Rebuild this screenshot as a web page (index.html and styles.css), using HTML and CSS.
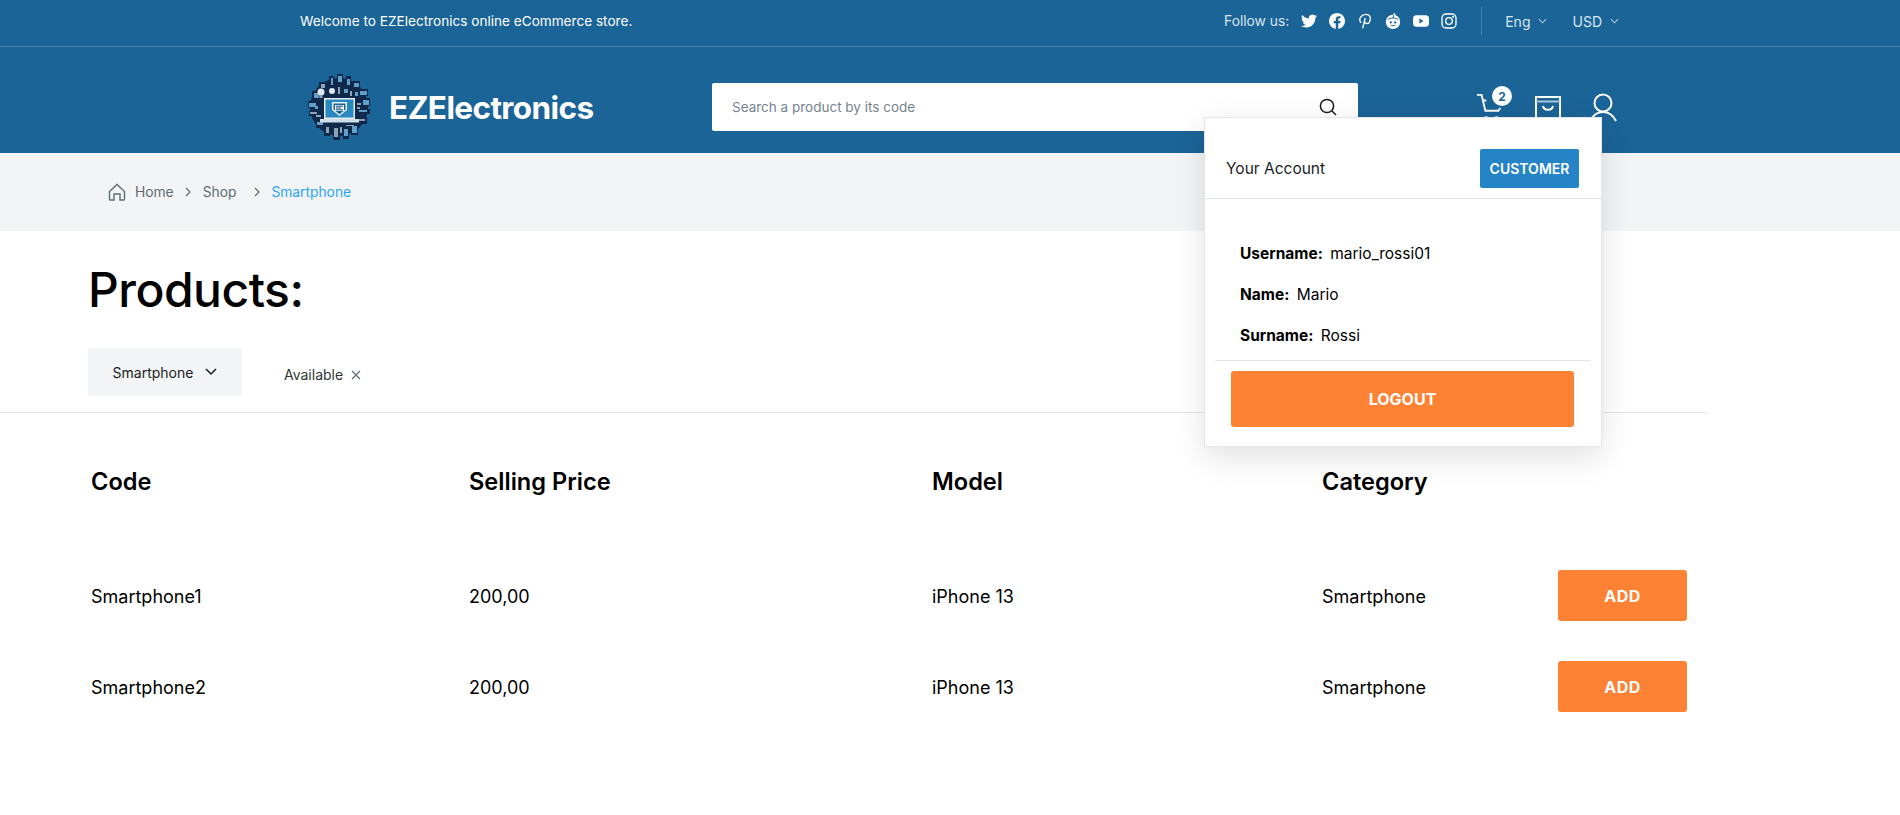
FILE: index.html
```html
<!DOCTYPE html>
<html lang="en">
<head>
    <meta charset="UTF-8">
    <meta name="viewport" content="width=device-width, initial-scale=1.0">
    <title>EZElectronics - Products</title>
    <link rel="stylesheet" href="styles.css">
</head>
<body>
    <header class="site-header">
        <div class="top-bar">
            <p class="welcome">Welcome to EZElectronics online eCommerce store.</p>
            <div class="top-right">
                <span class="follow">Follow us:</span>
                <div class="socials">
                    <svg class="social" viewBox="0 0 24 24"><path d="M23.953 4.57a10 10 0 01-2.825.775 4.958 4.958 0 002.163-2.723c-.951.555-2.005.959-3.127 1.184a4.92 4.92 0 00-8.384 4.482C7.69 8.095 4.067 6.13 1.64 3.162a4.822 4.822 0 00-.666 2.475c0 1.71.87 3.213 2.188 4.096a4.904 4.904 0 01-2.228-.616v.06a4.923 4.923 0 003.946 4.827 4.996 4.996 0 01-2.212.085 4.936 4.936 0 004.604 3.417 9.867 9.867 0 01-6.102 2.105c-.39 0-.779-.023-1.17-.067a13.995 13.995 0 007.557 2.209c9.053 0 13.998-7.496 13.998-13.985 0-.21 0-.42-.015-.63A9.935 9.935 0 0024 4.59z"/></svg>
                    <svg class="social" viewBox="0 0 24 24"><path d="M24 12.073c0-6.627-5.373-12-12-12s-12 5.373-12 12c0 5.99 4.388 10.954 10.125 11.854v-8.385H7.078v-3.47h3.047V9.43c0-3.007 1.792-4.669 4.533-4.669 1.312 0 2.686.235 2.686.235v2.953H15.83c-1.491 0-1.956.925-1.956 1.874v2.25h3.328l-.532 3.47h-2.796v8.385C19.612 23.027 24 18.062 24 12.073z"/></svg>
                    <svg class="social" viewBox="0 0 24 24"><path class="line" d="M6 14.500C4 12.500 3.800 9 5.500 6.300 7.500 3 12 1.500 15.500 2.600c3.500 1.100 5 4.200 4.300 7.600-.7 3.500-3 5.900-5.800 5.500-1.800-.3-2.700-1.600-2.600-3M12.300 7.500 8.500 23"/></svg>
                    <svg class="social" viewBox="0 0 24 24">
                        <path fill-rule="evenodd" d="M12 2.500a10.750 10.750 0 100 21.500 10.750 10.750 0 000-21.500zM8.700 12.500a1.700 1.700 0 110 3.400 1.700 1.700 0 010-3.400zm6.600 0a1.700 1.700 0 110 3.400 1.700 1.700 0 010-3.400z"/>
                        <path class="cut" d="M4 10.500C7 6.500 17 6.500 20 10.500M8.200 18c2.200 1.500 5.400 1.500 7.600 0M12 7.500l1-4.500"/>
                        <circle cx="14" cy="2" r="1.700"/>
                    </svg>
                    <svg class="social" viewBox="0 0 24 24"><path fill-rule="evenodd" d="M5 3.500h14a5 5 0 015 4.500v8a5 5 0 01-5 4.500H5a5 5 0 01-5-4.500V8a5 5 0 015-4.500zM9.600 8.400v7.200l6.200-3.600z"/></svg>
                    <svg class="social" viewBox="0 0 24 24"><rect class="line" x="1.500" y="1.500" width="21" height="21" rx="6"/><circle class="line" cx="12" cy="12" r="5"/><circle cx="18.200" cy="5.800" r="1.500"/></svg>
                </div>
                <span class="top-divider"></span>
                <span class="picker">Eng <svg class="picker-arrow" viewBox="0 0 10 6"><path d="M1 1l4 4 4-4"/></svg></span>
                <span class="picker">USD <svg class="picker-arrow" viewBox="0 0 10 6"><path d="M1 1l4 4 4-4"/></svg></span>
            </div>
        </div>

        <div class="main-bar">
            <a class="brand" href="#">
                <svg class="brand-logo" viewBox="0 0 66 68">
                    <circle cx="32" cy="34" r="29" fill="#10294a"/>
                    <g fill="#10294a">
                        <rect x="22" y="3" width="5" height="9"/><rect x="30" y="1" width="6" height="9"/><rect x="39" y="3" width="5" height="9"/>
                        <rect x="46" y="8" width="7" height="7"/><rect x="52" y="16" width="9" height="7"/><rect x="55" y="25" width="8" height="8"/>
                        <rect x="54" y="36" width="9" height="5"/><rect x="51" y="44" width="9" height="7"/><rect x="44" y="52" width="7" height="10"/>
                        <rect x="36" y="55" width="6" height="11"/><rect x="26" y="56" width="7" height="11"/><rect x="17" y="53" width="6" height="10"/>
                        <rect x="9" y="47" width="8" height="8"/><rect x="2" y="38" width="9" height="5"/><rect x="1" y="28" width="8" height="7"/>
                        <rect x="5" y="18" width="8" height="8"/><rect x="12" y="9" width="8" height="7"/>
                    </g>
                    <g fill="#5f9fc9">
                        <rect x="24" y="5" width="2" height="7"/><rect x="31" y="3" width="4" height="6"/><rect x="40" y="6" width="3" height="6"/>
                        <rect x="47" y="10" width="5" height="4"/><rect x="53" y="18" width="7" height="4"/><rect x="2" y="30" width="7" height="4"/>
                        <rect x="56" y="27" width="6" height="5"/><rect x="52" y="37" width="8" height="2"/><rect x="7" y="20" width="5" height="5"/>
                        <rect x="45" y="53" width="5" height="7"/><rect x="37" y="56" width="4" height="7"/><rect x="10" y="49" width="6" height="3"/>
                        <rect x="48" y="19" width="3" height="4"/><rect x="37" y="16" width="4" height="4"/><rect x="8" y="33" width="3" height="3"/>
                    </g>
                    <g fill="#8aa3b8">
                        <rect x="27" y="55" width="4" height="9"/><rect x="19" y="54" width="3" height="6"/><rect x="33" y="54" width="2" height="6"/>
                        <rect x="3" y="39" width="7" height="2"/><rect x="52" y="46" width="6" height="2"/><rect x="14" y="11" width="4" height="4"/>
                        <rect x="43" y="18" width="2" height="5"/><rect x="31" y="14" width="2" height="7"/><rect x="9" y="42" width="5" height="2"/>
                        <rect x="50" y="30" width="4" height="2"/><rect x="50" y="34" width="3" height="2"/><rect x="39" y="52" width="8" height="1"/>
                    </g>
                    <circle cx="14" cy="19" r="3.500" fill="#dfe8ee"/>
                    <rect x="12.500" y="22" width="3" height="3" fill="#8aa3b8"/>
                    <circle cx="25" cy="18" r="3" fill="#dfe8ee"/>
                    <rect x="17" y="25" width="31" height="21" fill="#e3ecf2"/>
                    <rect x="18.500" y="26.500" width="28" height="18" fill="#2a88c0"/>
                    <path d="M25 29h15v8l-7.500 6L25 37z" fill="#e8f1f6"/>
                    <path d="M26.500 30.500h12v6l-6 4.800-6-4.800z" fill="#1b6497"/>
                    <rect x="28" y="32" width="9" height="6" fill="#f2f6f9"/>
                    <path d="M29 33.200h7M29 35h5M29 36.800h7" stroke="#17507e" stroke-width="1"/>
                    <rect x="13" y="46" width="39" height="3.500" fill="#cfdde6"/>
                </svg>
                <span class="brand-name">EZElectronics</span>
            </a>
            <div class="search">
                <input class="search-input" type="text" placeholder="Search a product by its code">
                <svg class="search-icon" viewBox="0 0 18 18"><circle cx="8" cy="8" r="6.600"/><path d="M13 13l4 4"/></svg>
            </div>
            <div class="header-icons">
                <div class="cart">
                    <svg class="header-icon" viewBox="0 0 30 32"><path d="M1 3h5l4 17h14l2-3"/><path d="M7 9h4"/><circle cx="11" cy="29" r="2"/><circle cx="22" cy="29" r="2"/></svg>
                    <span class="cart-badge">2</span>
                </div>
                <svg class="header-icon bag" viewBox="0 0 26 28"><path d="M1 1h24v26H1z"/><path class="bag-band" d="M1 5.500h24"/><path d="M8 10c1 5 9 5 10 0"/></svg>
                <svg class="header-icon user" viewBox="0 0 28 30"><circle cx="14" cy="10" r="8.500"/><path d="M1 28c3-6 7-9 13-9s10 3 13 9"/></svg>
            </div>
        </div>
    </header>

    <div class="account-menu">
        <div class="account-head">
            <span>Your Account</span>
            <span class="role-badge">CUSTOMER</span>
        </div>
        <ul class="account-info">
            <li><b>Username:</b> mario_rossi01</li>
            <li><b>Name:</b> Mario</li>
            <li><b>Surname:</b> Rossi</li>
        </ul>
        <div class="account-foot">
            <button class="btn logout-btn">LOGOUT</button>
        </div>
    </div>

    <nav class="breadcrumb">
        <svg class="home-icon" viewBox="0 0 18 18"><path d="M1.500 8.500L9 1.500l7.500 7v7.500a1 1 0 01-1 1H12v-6H6v6H2.500a1 1 0 01-1-1z"/></svg>
        <a class="crumb crumb-home" href="#">Home</a>
        <svg class="crumb-sep" viewBox="0 0 6 10"><path d="M1 1l4 4-4 4"/></svg>
        <a class="crumb crumb-shop" href="#">Shop</a>
        <svg class="crumb-sep" viewBox="0 0 6 10"><path d="M1 1l4 4-4 4"/></svg>
        <a class="crumb crumb-active" href="#">Smartphone</a>
    </nav>

    <main class="products">
        <h1 class="products-title">Products:</h1>
        <div class="filters">
            <button class="category-select">Smartphone <svg class="select-arrow" viewBox="0 0 12 8"><path d="M1 1l5 5 5-5"/></svg></button>
            <span class="filter-tag">Available <svg class="tag-close" viewBox="0 0 10 10"><path d="M1 1l8 8M9 1l-8 8"/></svg></span>
        </div>
        <div class="product-table">
            <div class="row row-head">
                <span>Code</span><span>Selling Price</span><span>Model</span><span>Category</span><span></span>
            </div>
            <div class="row">
                <span>Smartphone1</span><span>200,00</span><span>iPhone 13</span><span>Smartphone</span>
                <button class="btn add-btn">ADD</button>
            </div>
            <div class="row">
                <span>Smartphone2</span><span>200,00</span><span>iPhone 13</span><span>Smartphone</span>
                <button class="btn add-btn">ADD</button>
            </div>
        </div>
    </main>
</body>
</html>
```

FILE: styles.css
```css
* {
    margin: 0;
    padding: 0;
    box-sizing: border-box;
}

body {
    font-family: 'Inter', 'Liberation Sans', sans-serif;
    background-color: #ffffff;
    color: #000;
    height: 815px;
    overflow: hidden;
    position: relative;
}

a {
    text-decoration: none;
    color: inherit;
}

/* Header */
.site-header {
    background-color: #1b6497;
    color: #fff;
    height: 153px;
}

.top-bar {
    height: 47px;
    border-bottom: 1px solid #4a84ad;
    padding: 0 281px 4px 300px;
    display: flex;
    justify-content: space-between;
    align-items: center;
    font-size: 13.600px;
}

.top-right {
    display: flex;
    align-items: center;
    color: #d8e5ee;
}

.follow {
    font-size: 13.800px;
}

.socials {
    display: flex;
    align-items: center;
    gap: 12px;
    margin-left: 12px;
}

.social {
    width: 16px;
    height: 16px;
    fill: #fff;
}

.social .line {
    fill: none;
    stroke: #fff;
    stroke-width: 2;
}

.social .cut {
    fill: none;
    stroke: #1b6497;
    stroke-width: 1.500;
}

.top-divider {
    width: 1px;
    height: 28px;
    background-color: #4a84ad;
    margin: 0 23px 0 24px;
}

.picker {
    display: flex;
    align-items: center;
    gap: 8px;
    margin-right: 25px;
    font-size: 14px;
}

.picker:last-child {
    margin-right: 0;
}

.picker-arrow {
    width: 9px;
    height: 6px;
    fill: none;
    stroke: #b3cbdc;
    stroke-width: 1.200;
}

.main-bar {
    height: 106px;
    padding: 14px 0 0 307px;
    display: flex;
    align-items: center;
}

.brand {
    display: flex;
    align-items: center;
    gap: 16px;
    width: 405px;
}

.brand-logo {
    width: 66px;
    height: 68px;
    flex-shrink: 0;
}

.brand-name {
    font-size: 31.500px;
    font-weight: 700;
    letter-spacing: -0.6px;
}

.search {
    width: 646px;
    height: 48px;
    background-color: #fff;
    border-radius: 2px;
    display: flex;
    align-items: center;
    padding: 0 21px 0 20px;
}

.search-input {
    flex: 1;
    border: none;
    outline: none;
    font-family: inherit;
    font-size: 13.500px;
}

.search-input::placeholder {
    color: #77838f;
}

.search-icon {
    width: 18px;
    height: 18px;
    fill: none;
    stroke: #1a1a1a;
    stroke-width: 1.500;
}

.header-icons {
    display: flex;
    align-items: center;
    gap: 31px;
    margin-left: 118px;
}

.cart {
    position: relative;
    display: flex;
}

.cart-badge {
    position: absolute;
    top: -6px;
    right: -8px;
    width: 20px;
    height: 20px;
    border-radius: 50%;
    background-color: #fff;
    color: #1b6497;
    font-size: 12px;
    font-weight: 700;
    display: flex;
    align-items: center;
    justify-content: center;
}

.header-icon {
    width: 28px;
    height: 30px;
    fill: none;
    stroke: #fff;
    stroke-width: 2;
}

.bag {
    width: 26px;
    height: 28px;
    margin-top: 5px;
}

.bag .bag-band {
    stroke: #a9c5d9;
}

.user {
    margin: 1px 0 0 -3px;
}

/* Account dropdown */
.account-menu {
    position: absolute;
    left: 1204px;
    top: 117px;
    width: 398px;
    height: 330px;
    background-color: #fff;
    border: 1px solid #e4e7e9;
    box-shadow: 0 10px 30px rgba(0, 0, 0, 0.12);
    z-index: 10;
}

.account-head {
    height: 81px;
    padding: 30px 22px 9px 21px;
    border-bottom: 1px solid #e4e7e9;
    display: flex;
    justify-content: space-between;
    align-items: center;
    font-size: 15.500px;
    color: #191c1f;
}

.role-badge {
    width: 99px;
    height: 39px;
    background-color: #2484c6;
    border-radius: 2px;
    color: #fff;
    font-size: 14px;
    font-weight: 600;
    display: flex;
    align-items: center;
    justify-content: center;
}

.account-info {
    list-style: none;
    padding: 43px 0 0 35px;
    height: 161px;
    font-size: 15.500px;
}

.account-info li {
    height: 41px;
    line-height: 24px;
}

.account-info b {
    font-weight: 700;
    margin-right: 3px;
}

.account-foot {
    margin: 0 10px;
    border-top: 1px solid #e4e7e9;
    padding: 10px 16px;
}

.btn {
    border: none;
    border-radius: 3px;
    background-color: #fd8234;
    color: #fff;
    font-family: inherit;
    font-weight: 700;
    cursor: pointer;
}

.logout-btn {
    width: 343px;
    height: 56px;
    font-size: 16px;
}

/* Breadcrumb */
.breadcrumb {
    height: 78px;
    background-color: #f2f4f5;
    padding-left: 108px;
    display: flex;
    align-items: center;
    font-size: 13.800px;
}

.home-icon {
    width: 18px;
    height: 18px;
    fill: none;
    stroke: #5f6c72;
    stroke-width: 1.400;
}

.crumb {
    color: #5f6c72;
}

.crumb-home {
    margin-left: 9px;
}

.crumb-shop {
    margin-right: 6px;
}

.crumb-active {
    color: #2da5f3;
}

.crumb-sep {
    width: 6px;
    height: 10px;
    margin: 0 11.500px;
    fill: none;
    stroke: #5f6c72;
    stroke-width: 1.200;
}

/* Products */
.products-title {
    font-size: 48px;
    font-weight: 500;
    line-height: 60px;
    padding: 29px 0 0 88px;
    letter-spacing: -0.5px;
}

.filters {
    width: 1708px;
    height: 65px;
    margin-top: 28px;
    padding-left: 88px;
    border-bottom: 1px solid #e4e7e9;
    display: flex;
    align-items: flex-start;
}

.category-select {
    width: 154px;
    height: 48px;
    border: none;
    border-radius: 2px;
    background-color: #f2f4f5;
    color: #191c1f;
    font-family: inherit;
    font-size: 14px;
    display: flex;
    align-items: center;
    justify-content: center;
    gap: 12px;
}

.select-arrow {
    width: 12px;
    height: 8px;
    fill: none;
    stroke: #191c1f;
    stroke-width: 1.500;
}

.filter-tag {
    margin: 18px 0 0 42px;
    font-size: 14px;
    color: #303639;
    display: flex;
    align-items: center;
    gap: 8px;
}

.tag-close {
    width: 10px;
    height: 10px;
    fill: none;
    stroke: #5f6c72;
    stroke-width: 1.200;
}

.product-table {
    padding: 0 213px 0 91px;
}

.row {
    display: grid;
    grid-template-columns: 378px 463px 390px 236px 129px;
    align-items: center;
    height: 91px;
    font-size: 18px;
}

.row span {
    padding-top: 2px;
}

.row-head {
    height: 137px;
    font-size: 23.600px;
    font-weight: 600;
}

.row-head span {
    padding-top: 0;
}

.add-btn {
    width: 129px;
    height: 51px;
    font-size: 16px;
    letter-spacing: 0.5px;
}
```
